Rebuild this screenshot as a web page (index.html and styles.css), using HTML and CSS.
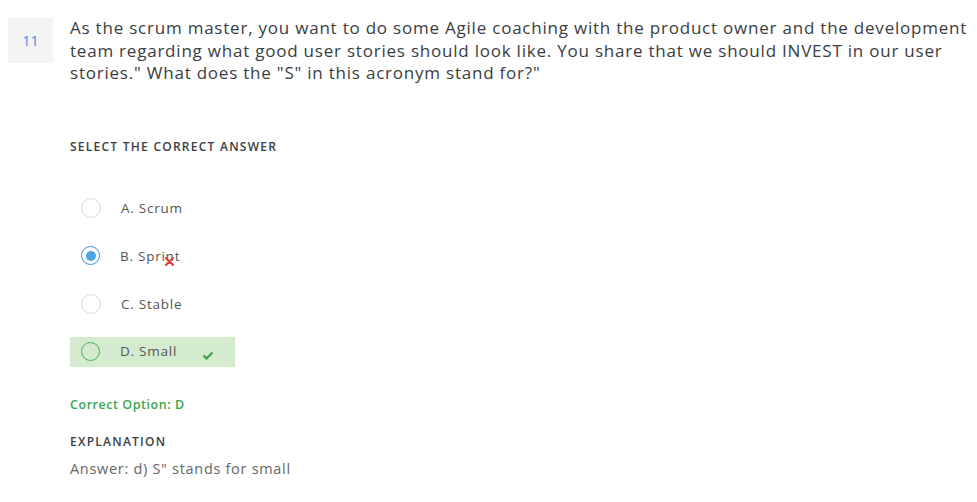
FILE: index.html
```html
<!DOCTYPE html>
<html>
<head>
<meta charset="utf-8">
<link rel="stylesheet" href="styles.css">
</head>
<body>
<div class="question">
  <div class="qnum">11</div>
  <div class="qbody">
    <p class="qtext">As the scrum master, you want to do some Agile coaching with the product owner and the development team regarding what good user stories should look like. You share that we should INVEST in our user stories." What does the "S" in this acronym stand for?"</p>
    <div class="label select-label">SELECT THE CORRECT ANSWER</div>
    <ul class="options">
      <li class="option"><span class="radio"></span><span class="otext">A. Scrum</span></li>
      <li class="option"><span class="radio checked"></span><span class="otext">B. Sprint<svg class="xmark" width="9" height="9" viewBox="0 0 9 9"><path d="M1 1L8 8M8 1L1 8" stroke="#e0403a" stroke-width="2.2" stroke-linecap="round"/></svg></span></li>
      <li class="option"><span class="radio"></span><span class="otext">C. Stable</span></li>
      <li class="option correct"><span class="radio green"></span><span class="otext">D. Small</span><svg class="check" width="12" height="9" viewBox="0 0 12 9"><path d="M1.5 4.5L4.5 7.5L10.5 1.5" stroke="#43a047" stroke-width="2.2" fill="none"/></svg></li>
    </ul>
    <div class="correct-opt">Correct Option: D</div>
    <div class="label expl-label">EXPLANATION</div>
    <p class="answer">Answer: d) S" stands for small</p>
  </div>
</div>
</body>
</html>
```
FILE: styles.css
```css
html, body {
  margin: 0;
  padding: 0;
  background: #fff;
}
body {
  font-family: "Open Sans", "Liberation Sans", sans-serif;
  color: #333;
}
.question {
  display: flex;
  align-items: flex-start;
  padding: 18px 0 0 8px;
  gap: 17px;
}
.qnum {
  width: 45px;
  height: 45px;
  flex: none;
  background: #f4f4f4;
  color: #3d8fe6;
  font-size: 14.5px;
  display: flex;
  align-items: center;
  justify-content: center;
}
.qbody {
  flex: 1;
}
.qtext {
  margin: -1px 0 0 0;
  font-size: 17px;
  line-height: 22.5px;
  color: #3a3d42;
  letter-spacing: 0.78px;
  padding-right: 0;
}
.label {
  font-size: 12px;
  font-weight: 600;
  color: #3a3d42;
  letter-spacing: 1.25px;
}
.select-label {
  margin-top: 53px;
}
.options {
  list-style: none;
  margin: 38px 0 0 0;
  padding: 0;
}
.option {
  display: flex;
  align-items: center;
  width: 165px;
  height: 30px;
  margin-bottom: 18px;
  position: relative;
}
.radio {
  width: 18px;
  height: 18px;
  border: 1px solid #d8d8d8;
  border-radius: 50%;
  margin-left: 11px;
  box-sizing: content-box;
  display: flex;
  align-items: center;
  justify-content: center;
  flex: none;
}
.radio.checked {
  border: 1.5px solid #3a8fe8;
  width: 17px;
  height: 17px;
}
.radio.checked::after {
  content: "";
  width: 10px;
  height: 10px;
  border-radius: 50%;
  background: #4aa6e4;
}
.radio.green {
  border: 1.5px solid #4caf50;
  width: 17px;
  height: 17px;
}
.otext {
  margin-left: 20px;
  font-size: 13.5px;
  color: #555;
  position: relative;
  letter-spacing: 0.75px;
}
.xmark {
  position: absolute;
  left: 45px;
  top: 10px;
}
.option.correct {
  background: #d4ebd0;
  margin-bottom: 0;
}
.option.correct .otext {
  margin-top: -2px;
}
.check {
  margin-left: 25px;
  margin-top: 7px;
}
.correct-opt {
  margin-top: 29px;
  font-size: 12.5px;
  font-weight: 600;
  color: #3aa54a;
  letter-spacing: 0.55px;
}
.expl-label {
  margin-top: 20px;
}
.answer {
  margin: 9px 0 0 0;
  font-size: 14.5px;
  color: #666;
  letter-spacing: 0.7px;
}
```
